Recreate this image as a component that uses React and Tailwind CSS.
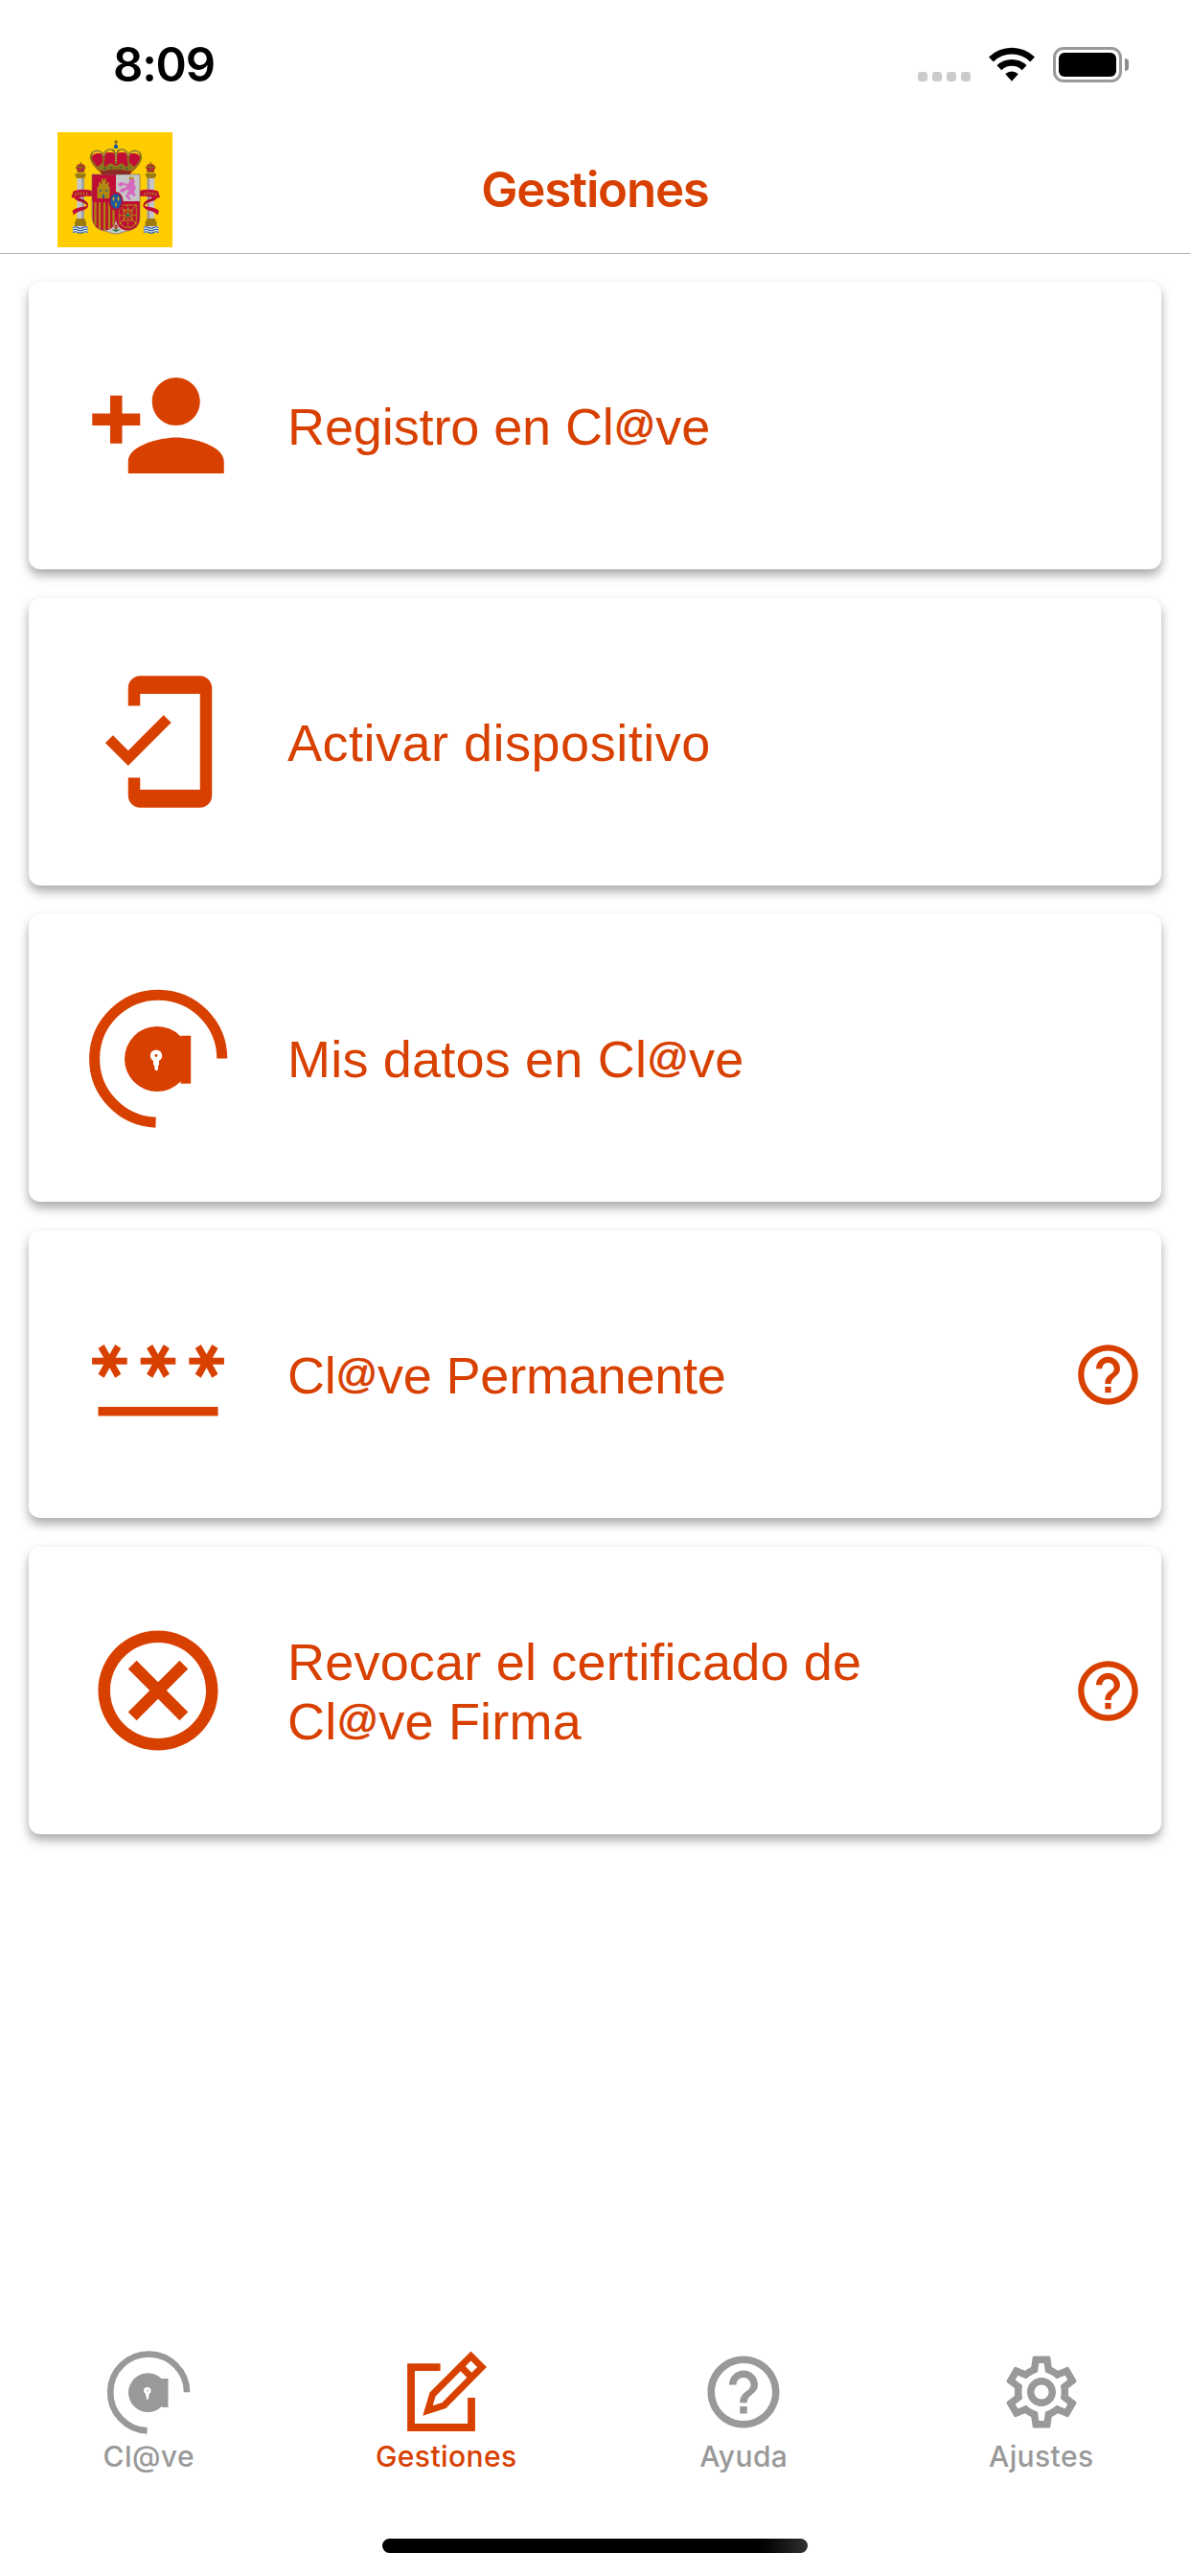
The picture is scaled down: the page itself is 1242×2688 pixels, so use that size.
import React, { useState } from 'react'
import { MdHelpOutline, MdMobileFriendly, MdOutlineCancel, MdOutlineSettings, MdPersonAdd } from 'react-icons/md'

const ClaveIcon = ({ className }) => (
  <svg viewBox="0 0 150 150" className={className} fill="currentColor">
    <path d="M72.6 142.3A66.6 66.6 0 1 1 141.8 75.5" fill="none" stroke="currentColor" strokeWidth="11" />
    <circle cx="74" cy="76" r="34" />
    <path d="M98.6 51.7h10.6v50H98.6z" />
    <circle cx="73" cy="72.7" r="6.2" fill="#fff" />
    <path d="M70 77h6v5l-1 1v4l-1.5 1.5-2-1.5-.3-4-1.2-1z" fill="#fff" />
    <circle cx="73" cy="72.5" r="1.4" />
  </svg>
)

const Asterisk = ({ x }) => (
  <path
    transform={`translate(${x} 61.3)`}
    d="M-18.3-3.5H-6.2L-11.9-13.4-5.8-17.4 0-7 5.8-17.4 11.9-13.4 6.2-3.5H18.3V3.5H6.2L11.9 13.4 5.8 17.4 0 7-5.8 17.4-11.9 13.4-6.2 3.5H-18.3z"
  />
)

const PasswordIcon = ({ className }) => (
  <svg viewBox="0 0 150 150" className={className} fill="currentColor">
    <Asterisk x={24.4} />
    <Asterisk x={75} />
    <Asterisk x={125.6} />
    <path d="M12.5 109h125v9.4h-125z" />
  </svg>
)

const EditIcon = ({ className }) => (
  <svg viewBox="0 0 90 90" className={className} fill="none" stroke="currentColor">
    <path d="M38.6 19.2H8V82H71V51" strokeWidth="7.8" />
    <path d="M30.5 47.5 70.5 7.5 82 19 42.5 59 25.5 64.5z" strokeWidth="7" />
    <path d="M60 18.5 71.5 30" strokeWidth="7" />
  </svg>
)

const Pillar = () => (
  <g>
    {/* crown and capital */}
    <path d="M20 38c-1-4 2-5 4.3-5s5.3 1 4.3 5l-1 4h-6.5z" fill="#b5263a" />
    <path d="M19 37.5q2.5-3 5.2 0 2.7-3 5.2 0M24.3 31v8M20.5 41.5h7.5" stroke="#8a6a14" strokeWidth="1.3" fill="none" />
    <path d="M18.5 43h11v2.5l-1.8 2.5h-7.4l-1.8-2.5z" fill="#9c7c10" />
    {/* shaft and base */}
    <path d="M20.3 48h7.5v42h-7.5z" fill="#c6c6c6" />
    <path d="M25.5 48h2.3v42h-2.3z" fill="#989898" />
    <path d="M20 90h8l2 4v4H18v-4z" fill="#9c7c10" />
    <path d="M16 98h15.5v7H16z" fill="#dfe3e8" />
    <path d="M16 99.5q2.6-1.5 5.2 0t5.2 0 5.2 0M16 102q2.6-1.5 5.2 0t5.2 0 5.2 0M16 104.5q2.6-1.5 5.2 0t5.2 0 5.2 0" stroke="#1d5a9c" strokeWidth="1.2" fill="none" />
    {/* ribbon */}
    <path d="M36 61c-7-2-14-1.5-19.5.5L14.5 68l3 .5c1 4 12 4 13.5 8-3 2-14 1.5-15.5 6l1.5 4c3-5 13-4 15-9 1-5-5-7.5-10-9 4-1.5 9-2 14-1.5z" fill="#c00d35" />
    <path d="M21.5 69.5c5 1.5 9 3.5 9.5 6.5" stroke="#7a0b24" strokeWidth="1" fill="none" />
    <path d="M18.5 66.5l.8-3.5M21.5 65.8l.5-3.5M24.5 65.5v-3.3M27.5 65.5l-.2-3.3M30.5 65.8v-3.3" stroke="#a98a1c" strokeWidth="1" />
  </g>
)

const SpainEmblem = ({ className }) => (
  <svg viewBox="0 0 120 120" className={className}>
    <path d="M0 0h120v120H0z" fill="#ffcc00" />
    <Pillar />
    <g transform="translate(121.5 0) scale(-1 1)">
      <Pillar />
    </g>

    {/* shield quarters */}
    <path d="M36 44h50v44c0 8-6 14-13 15-3 0-6 3-12 3s-9-3-12-3c-7-1-13-7-13-15z" fill="#c6c6c6" />
    <path d="M36 44h25v28H36z" fill="#c00d35" />
    <path d="M36.5 72H61v18c0 7-5 12.5-12 12.5S36.5 97 36.5 90z" fill="#c00d35" />
    <path d="M39.5 73v24M44 73v28M49 73v29M54 73v28M58.5 73v24" stroke="#a98410" strokeWidth="2.3" />
    <path d="M61 72h25v18c0 7-5 12.5-12.5 12.5S61 97 61 90z" fill="#c00d35" />
    <path d="M64.5 76h18v14c0 6-4 9.5-9 9.5s-9-3.5-9-9.5zM64.5 76l18 20M82.5 76l-18 20M73.5 76v23M64.5 86.5h18M69 81h9v11h-9z" stroke="#b08a10" strokeWidth="1.4" strokeDasharray="1.8 .8" fill="none" />
    <circle cx="73.5" cy="86.5" r="1.8" fill="#1d7f4a" />
    <path d="M36 44h50v44c0 8-6 14-13 15-3 0-6 3-12 3s-9-3-12-3c-7-1-13-7-13-15z" fill="none" stroke="#7d6a50" strokeWidth=".7" />
    <path d="M41.5 69V57h1.500v-5h2v2h1v-6h1.500v2h1.500v-2h1.500v6h1v-2h2v5h1v12z" fill="#b08a10" />
    <path d="M47 69v-4h2v4zM44 60h1.5v2H44zM50.5 60h1.5v2h-1.5z" fill="#24549a" />
    <path d="M75 49l4-1 2 3-1 3 2 4-2 4 2 4-3 1-2-3-3 3 3 2-2 2-4-4 2-4 2-2-3-1-4 3-3-1 1-3 4-1 3-2-4-1-4 2-2-3 3-2 4 1 3 1 2-2z" fill="#d76ac0" />
    <path d="M74.5 49l1-3 2 1.5 1.5-1.5.5 3z" fill="#b08a10" />
    <ellipse cx="61" cy="72" rx="7.6" ry="10" fill="#b30f35" />
    <ellipse cx="61" cy="72" rx="5.8" ry="7.8" fill="#1b56a0" />
    <path d="M58.5 67v5M63.5 67v5M61 73v5M57 69.5h3M62 69.5h3M59.5 75.5h3" stroke="#c29a18" strokeWidth="1.2" />
    <path d="M56.5 101.5h9l-4.5 2.5z" fill="#237548" />
    <ellipse cx="61" cy="98.8" rx="1.8" ry="2.5" fill="#a8492c" />

    {/* royal crown */}
    <path d="M39 36c-4-4-5-9-2-12 3-3 8-2 11-1 4-3 9-2 13-1 4-1 9-2 13 1 3-1 8-2 11 1 3 3 2 8-2 12l-7 7H46z" fill="#c00d35" />
    <g fill="none" stroke="#8a701c" strokeWidth="2">
      <path d="M40 35c-5-4-7-10-3-14 4-3 9-1 11 3 1 4 0 8-1 12" />
      <path d="M82 35c5-4 7-10 3-14-4-3-9-1-11 3-1 4 0 8 1 12" />
      <path d="M48 27c0-7 5-10 9-9 4 2 4 6 4 15M74 27c0-7-5-10-9-9-4 2-4 6-4 15" />
    </g>
    <path d="M37 21.5c4-3 9-1 11 3.5M85 21.5c-4-3-9-1-11 3.5M49 24c0-5 5-7.5 9-6M73 24c0-5-5-7.5-9-6M61 20v11" fill="none" stroke="#e9d488" strokeWidth="1" strokeDasharray="1 1.2" />
    <path d="M38 33l4 3 4-4 4 4 5-4 6 3 6-3 5 4 4-4 4 4 4-3-3 6-4 2c-10-3-22-3-32 0l-4-2z" fill="#8f741a" />
    <path d="M45 40.5c10-3 22-3 32 0l-1 3.5H46z" fill="#8c2a26" />
    <path d="M46 39.8c10-2.5 20-2.5 30 0" stroke="#8f741a" strokeWidth="1.4" fill="none" />
    <path d="M48 37.5h3M54.5 37h3M64.5 37h3M71 37.5h3" stroke="#2c6a3c" strokeWidth="1.5" />
    <path d="M61 8v7M59 10.3h4" stroke="#8a701c" strokeWidth="1.5" />
    <circle cx="61" cy="15" r="2.2" fill="#1b56a0" />
  </svg>
)

const options = [
  { id: 'registro', label: 'Registro en Cl@ve', Icon: MdPersonAdd, tracking: 'tracking-[-0.1px]' },
  { id: 'activar', label: 'Activar dispositivo', Icon: MdMobileFriendly, tracking: 'tracking-[0.5px]' },
  { id: 'datos', label: 'Mis datos en Cl@ve', Icon: ClaveIcon, tracking: 'tracking-[0.2px]' },
  { id: 'permanente', label: 'Cl@ve Permanente', Icon: PasswordIcon, tracking: 'tracking-[-0.2px]', help: true },
  { id: 'revocar', label: 'Revocar el certificado de Cl@ve Firma', Icon: MdOutlineCancel, tracking: 'tracking-[0.2px]', help: true },
]

const tabs = [
  { id: 'clave', label: 'Cl@ve', Icon: ClaveIcon },
  { id: 'gestiones', label: 'Gestiones', Icon: EditIcon },
  { id: 'ayuda', label: 'Ayuda', Icon: MdHelpOutline },
  { id: 'ajustes', label: 'Ajustes', Icon: MdOutlineSettings },
]

function StatusBar() {
  return (
    <div className="flex h-[132px] items-start justify-between pt-[49px] pr-[64px] pl-[118px] text-black">
      <span className="text-[49px] leading-[38px] font-semibold tracking-[-1.2px]">8:09</span>
      <div className="flex items-start">
        <div className="mt-[26px] mr-[64px] flex w-[10px] gap-[5px]">
          {[0, 1, 2, 3].map(i => (
            <span key={i} className="h-[10px] w-[10px] shrink-0 rounded-[3px] bg-[#cbcbcb]" />
          ))}
        </div>
        <svg viewBox="0 0 48 36" className="mr-[19px] h-[36px] w-[48px]">
          <path d="M0 10.5A34.5 34.5 0 0 1 48 10.5L43.2 15.4A27.5 27.5 0 0 0 4.8 15.4z" />
          <path d="M8.5 19.3A22 22 0 0 1 39.5 19.3L34.7 24.2A15.2 15.2 0 0 0 13.3 24.2z" />
          <path d="M17.2 28.3A9.8 9.8 0 0 1 30.8 28.3L24 35.7z" />
        </svg>
        <div className="flex items-center gap-[3px]">
          <div className="h-[37px] w-[72px] rounded-[11px] border-[3px] border-[#999] p-[3px]">
            <div className="h-full w-full rounded-[6px] bg-black" />
          </div>
          <div className="h-[13px] w-[4px] rounded-r-full bg-[#8c8c8c]" />
        </div>
      </div>
    </div>
  )
}

function Label({ text }) {
  const [before, after] = text.split('@')
  if (after === undefined) return text
  return (
    <>
      {before}
      <span className="align-[6px] text-[43px] leading-none [-webkit-text-stroke:0.7px_currentColor]">@</span>
      {after}
    </>
  )
}

function OptionCard({ label, Icon, tracking, help }) {
  return (
    <button className="flex h-[300px] w-full items-center rounded-[12px] bg-white pr-[18px] pl-[60px] text-left text-[#d84000] shadow-[0_6px_11px_rgba(0,0,0,0.34)]">
      <Icon className="h-[150px] w-[150px] shrink-0" />
      <span className={`ml-[60px] w-[680px] pt-[2px] font-['Liberation_Sans',sans-serif] text-[54px] leading-[62px] ${tracking}`}>
        <Label text={label} />
      </span>
      {help && <MdHelpOutline className="ml-auto h-[75px] w-[75px] shrink-0" />}
    </button>
  )
}

export default function App() {
  const [active, setActive] = useState('gestiones')

  return (
    <div className="flex h-[2688px] w-[1242px] flex-col bg-white font-['Inter',sans-serif]">
      <StatusBar />

      <header className="grid h-[133px] grid-cols-[120px_1fr_120px] items-center border-b border-[#b2b2b2] px-[60px]">
        <SpainEmblem className="h-[120px] w-[120px]" />
        <h1 className="text-center text-[51px] leading-[60px] font-semibold tracking-[-1.2px] text-[#d84000]">Gestiones</h1>
      </header>

      <main className="flex flex-1 flex-col gap-[30px] px-[30px] pt-[29px]">
        {options.map(option => (
          <OptionCard key={option.id} {...option} />
        ))}
      </main>

      <nav className="grid h-[198px] grid-cols-4">
        {tabs.map(({ id, label, Icon }) => (
          <button
            key={id}
            onClick={() => setActive(id)}
            className={`flex flex-col items-center ${active === id ? 'text-[#d84000]' : 'text-[#999]'}`}
          >
            <Icon className="h-[90px] w-[90px] blur-[0.7px]" />
            <span className="mt-[4px] text-[30px] leading-[36px] font-medium tracking-[0.4px]">{label}</span>
          </button>
        ))}
      </nav>

      <div className="flex h-[39px] justify-center">
        <div className="h-[15px] w-[444px] rounded-full bg-linear-to-r from-black from-85% to-[#333]" />
      </div>
    </div>
  )
}
